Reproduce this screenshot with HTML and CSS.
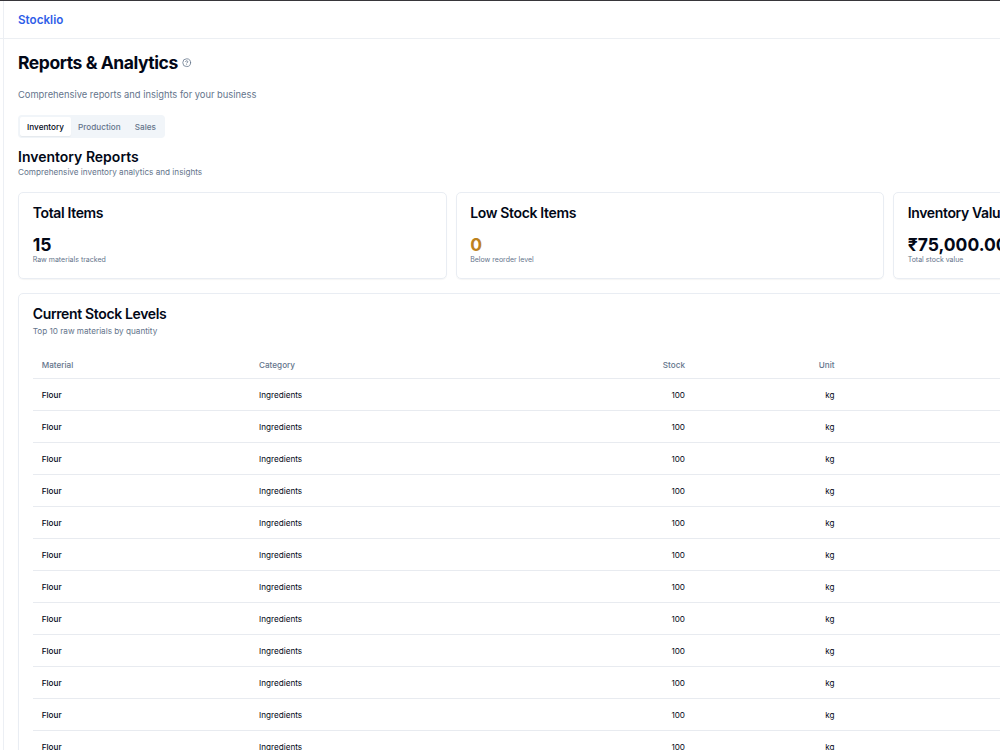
FILE: index.html
```html
<!DOCTYPE html>
<html lang="en">
<head>
  <meta charset="UTF-8">
  <meta name="viewport" content="width=device-width, initial-scale=1">
  <title>Stocklio - Reports &amp; Analytics</title>
  <link rel="stylesheet" href="styles.css">
</head>
<body>
  <div class="app">
    <header class="topbar">
      <a class="brand">Stocklio</a>
    </header>

    <main class="content">
      <div class="page-title">
        <h1>Reports &amp; Analytics</h1>
        <svg class="help-icon" viewBox="0 0 24 24" fill="none" stroke="currentColor" stroke-width="2" stroke-linecap="round" stroke-linejoin="round">
          <circle cx="12" cy="12" r="10"/>
          <path d="M9.09 9a3 3 0 0 1 5.83 1c0 2-3 3-3 3"/>
          <path d="M12 17h.01"/>
        </svg>
      </div>
      <p class="page-desc">Comprehensive reports and insights for your business</p>

      <div class="tabs">
        <button class="tab active">Inventory</button>
        <button class="tab">Production</button>
        <button class="tab">Sales</button>
      </div>

      <h2 class="section-title">Inventory Reports</h2>
      <p class="section-desc">Comprehensive inventory analytics and insights</p>

      <div class="stats">
        <div class="card stat">
          <h3>Total Items</h3>
          <div class="stat-value">15</div>
          <p class="stat-note">Raw materials tracked</p>
        </div>
        <div class="card stat">
          <h3>Low Stock Items</h3>
          <div class="stat-value warning">0</div>
          <p class="stat-note">Below reorder level</p>
        </div>
        <div class="card stat">
          <h3>Inventory Value</h3>
          <div class="stat-value">₹75,000.00</div>
          <p class="stat-note">Total stock value</p>
        </div>
      </div>

      <div class="card stock">
        <h3>Current Stock Levels</h3>
        <p class="stock-desc">Top 10 raw materials by quantity</p>
        <table class="stock-table">
          <thead>
            <tr>
              <th class="col-material">Material</th>
              <th class="col-category">Category</th>
              <th class="col-stock num">Stock</th>
              <th class="col-unit num">Unit</th>
              <th></th>
            </tr>
          </thead>
          <tbody>
            <tr><td class="name">Flour</td><td>Ingredients</td><td class="num">100</td><td class="num">kg</td><td></td></tr>
            <tr><td class="name">Flour</td><td>Ingredients</td><td class="num">100</td><td class="num">kg</td><td></td></tr>
            <tr><td class="name">Flour</td><td>Ingredients</td><td class="num">100</td><td class="num">kg</td><td></td></tr>
            <tr><td class="name">Flour</td><td>Ingredients</td><td class="num">100</td><td class="num">kg</td><td></td></tr>
            <tr><td class="name">Flour</td><td>Ingredients</td><td class="num">100</td><td class="num">kg</td><td></td></tr>
            <tr><td class="name">Flour</td><td>Ingredients</td><td class="num">100</td><td class="num">kg</td><td></td></tr>
            <tr><td class="name">Flour</td><td>Ingredients</td><td class="num">100</td><td class="num">kg</td><td></td></tr>
            <tr><td class="name">Flour</td><td>Ingredients</td><td class="num">100</td><td class="num">kg</td><td></td></tr>
            <tr><td class="name">Flour</td><td>Ingredients</td><td class="num">100</td><td class="num">kg</td><td></td></tr>
            <tr><td class="name">Flour</td><td>Ingredients</td><td class="num">100</td><td class="num">kg</td><td></td></tr>
            <tr><td class="name">Flour</td><td>Ingredients</td><td class="num">100</td><td class="num">kg</td><td></td></tr>
            <tr><td class="name">Flour</td><td>Ingredients</td><td class="num">100</td><td class="num">kg</td><td></td></tr>
          </tbody>
        </table>
      </div>
    </main>
  </div>
</body>
</html>
```

FILE: styles.css
```css
* {
  box-sizing: border-box;
  margin: 0;
  padding: 0;
}

body {
  height: 100vh;
  overflow: hidden;
  background: #ffffff;
  border-top: 1px solid #37363a;
  font-family: Inter, sans-serif;
  font-size: 8.16px;
  color: #020817;
}

/* wider than the window, the right side is clipped */
.app {
  width: 1332.5px;
  margin-left: 3px;
  border-left: 1px solid #eceff4;
}

.topbar {
  display: flex;
  align-items: center;
  height: 38px;
  margin-left: -4px;
  padding-left: 18px;
  border-bottom: 1px solid #eceff3;
}

.brand {
  font-size: 11.66px;
  font-weight: 600;
  color: #2f5ee8;
}

.content {
  padding: 13px 14px 0;
}

.page-title {
  display: flex;
  align-items: center;
  gap: 4.6px;
  height: 22px;
}

h1 {
  font-size: 17.5px;
  line-height: 22px;
  font-weight: 700;
  letter-spacing: -0.44px;
}

.help-icon {
  width: 9.4px;
  height: 9.4px;
  color: #64748b;
}

.page-desc {
  margin-top: 13px;
  font-size: 9.33px;
  line-height: 15px;
  color: #64748b;
}

.tabs {
  display: inline-flex;
  height: 23px;
  margin-top: 13px;
  padding: 2px;
  border-radius: 4px;
  background: #f1f5f9;
}

.tab {
  padding: 0 7.1px;
  border: none;
  border-radius: 2px;
  background: none;
  font-family: inherit;
  font-size: 8.16px;
  font-weight: 500;
  color: #64748b;
}

.tab.active {
  background: #ffffff;
  color: #020817;
  box-shadow: 0 1px 1px rgba(0, 0, 0, 0.05);
}

.section-title {
  margin-top: 10px;
  font-size: 14px;
  line-height: 17px;
  font-weight: 600;
}

.section-desc {
  margin-top: 1px;
  line-height: 13px;
  color: #64748b;
}

.stats {
  display: grid;
  grid-template-columns: repeat(3, 1fr);
  gap: 9px;
  margin-top: 13px;
}

.card {
  border: 1px solid #e9edf3;
  border-radius: 5px;
  box-shadow: 0 1px 1px rgba(0, 0, 0, 0.04);
}

.card h3 {
  font-size: 14px;
  line-height: 15px;
  font-weight: 600;
  letter-spacing: -0.35px;
}

.stat {
  height: 87px;
  padding: 12px 13.7px;
}

.stat-value {
  margin-top: 15px;
  font-size: 17.5px;
  line-height: 20px;
  font-weight: 700;
}

.stat-value.warning {
  color: #bd821d;
}

.stat-note {
  font-size: 7px;
  line-height: 10px;
  color: #64748b;
}

.stock {
  margin-top: 14px;
  padding: 12px 13.7px;
}

.stock-desc {
  margin-top: 4px;
  line-height: 12px;
  color: #64748b;
}

.stock-table {
  width: 100%;
  margin-top: 14px;
  border-collapse: separate;
  border-spacing: 0;
  table-layout: fixed;
}

.stock-table th,
.stock-table td {
  padding: 0 9px;
  border-bottom: 1px solid #e8ebf0;
  text-align: left;
  white-space: nowrap;
}

.stock-table th {
  height: 28px;
  font-weight: 500;
  color: #64748b;
}

.stock-table td {
  height: 32px;
}

.stock-table .name {
  font-weight: 500;
}

.stock-table .num {
  text-align: right;
}

.col-material {
  width: 217.3px;
}

.col-category {
  width: 250px;
}

.col-stock {
  width: 194px;
}

.col-unit {
  width: 149.5px;
}
```
